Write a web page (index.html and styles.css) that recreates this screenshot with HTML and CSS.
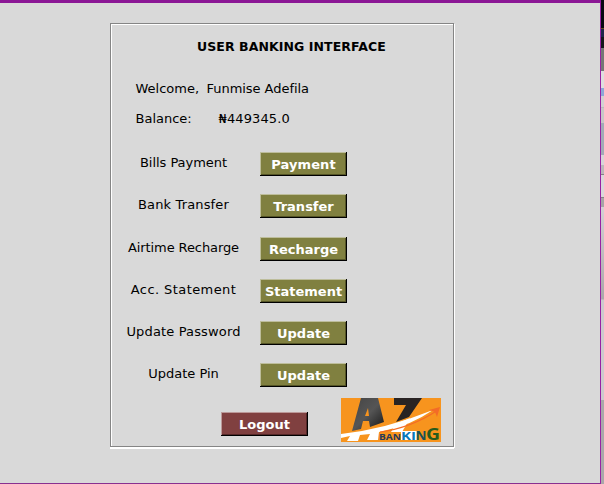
FILE: index.html
```html
<!DOCTYPE html>
<html lang="en">
<head>
<meta charset="utf-8">
<title>User Banking Interface</title>
<link rel="stylesheet" href="styles.css">
</head>
<body>
<div class="window">
  <main class="panel">
    <h1>USER BANKING INTERFACE</h1>
    <div class="info welcome"><span class="key">Welcome,</span><span class="name">Funmise Adefila</span></div>
    <div class="info balance"><span class="key">Balance:</span><span class="amount">₦449345.0</span></div>
    <div class="actions">
      <div class="row"><label class="bills">Bills Payment</label><button class="pay">Payment</button></div>
      <div class="row"><label class="transfer">Bank Transfer</label><button>Transfer</button></div>
      <div class="row late"><label class="airtime">Airtime Recharge</label><button>Recharge</button></div>
      <div class="row"><label class="statement">Acc. Statement</label><button>Statement</button></div>
      <div class="row"><label class="password">Update Password</label><button>Update</button></div>
      <div class="row"><label class="pin">Update Pin</label><button>Update</button></div>
    </div>
    <footer>
      <button class="logout">Logout</button>
      <svg class="logo" width="100" height="44" viewBox="0 0 100 44" role="img" aria-label="AZ Banking">
        <defs>
          <linearGradient id="dark" x1="0" y1="0" x2="1" y2="1"><stop offset="0" stop-color="#444"/><stop offset=".5" stop-color="#555"/><stop offset="1" stop-color="#151515"/></linearGradient>
        </defs>
        <rect width="100" height="44" fill="#f7941e"/>
        <path d="M20 0H37L43 24L29 29L28 23H22L20 31L11 33Z M24 18H28L27 10Z" fill="url(#dark)" fill-rule="evenodd"/>
        <path d="M53 0H81L68 19L55 24L65 7H53Z" fill="#292423"/>
        <path d="M0 36Q45 31 92 12Q70 27 46 32L38 34L37 42H26L29 36L19 37L17 43H6L9 38L0 40Z" fill="#fff"/>
        <path d="M55 26L69 20L61 34H50Z" fill="#fff"/>
        <path d="M39 34Q70 30 97 12" fill="none" stroke="#f36b27" stroke-width="1.2"/>
        <path d="M88 12L99 9L96 19L94 14Z" fill="#f36b27"/>
        <path d="M60 33H76V42H60Z" fill="#fff"/>
        <text class="brand" x="38" y="41.5" font-size="9" textLength="22" lengthAdjust="spacingAndGlyphs" fill="#283a58">BAN</text>
        <text class="brand" x="60" y="41.5" font-size="10.5" textLength="15" lengthAdjust="spacingAndGlyphs" fill="#0878b8">KI</text>
        <text class="brand" x="74.5" y="41.5" font-size="13" textLength="11" lengthAdjust="spacingAndGlyphs" fill="#17515a">N</text>
        <text class="brand" x="85" y="41.5" font-size="16" textLength="14" lengthAdjust="spacingAndGlyphs" fill="#275b1c">G</text>
      </svg>
    </footer>
  </main>
</div>
<aside class="desktop"></aside>
</body>
</html>
```
FILE: styles.css
```css
* { box-sizing: border-box; }
body {
  margin: 0;
  width: 604px;
  height: 484px;
  display: flex;
  overflow: hidden;
  background: #d9d9d9;
  color: #000;
  font: 13px/16px "DejaVu Sans", sans-serif;
}
.window {
  width: 601px;
  height: 484px;
  padding: 20px 0 0 110px;
  border-top: 3px solid #8b1795;
  border-right: 1px solid #9a20a4;
  border-bottom: 1px solid #883090;
}
.desktop {
  width: 3px;
  background: linear-gradient(#090812 0 28px, #665020 28px 29px, #202449 29px 37px, #17151b 37px 48px, #767676 48px 71px, #dedede 71px 88px, #8ea8d7 88px 96px, #d2d2d2 96px 107px, #bbb 107px 108px, #c7c7c7 108px 123px, #a2abb7 123px 155px, #d8d5d8 155px 165px, #bbb8bb 165px 174px, #858285 174px 175px, #dad7da 175px 197px, #858285 197px 198px, #a7a4a7 198px 207px, #d4d1d4 207px, #aaa7aa 299px, #cdcacd 300px 400px, #aaa8aa 400px);
}
.panel {
  width: 344px;
  height: 424px;
  padding-top: 15px;
  border: 1px solid #858585;
  box-shadow: inset 1px 1px #fff, 1px 1px #fff, 0 2px #fff;
}
h1 {
  margin: 0 0 0 86px;
  font: bold 12.5px/16px "DejaVu Sans", sans-serif;
  letter-spacing: .08px;
  white-space: nowrap;
}
.info { display: flex; height: 16px; margin-left: 24.5px; white-space: nowrap; }
.welcome { margin-top: 26px; }
.balance { margin-top: 14px; }
.welcome .key { width: 71px; }
.balance .key { width: 83px; }
.name { letter-spacing: -.04px; }
.amount { letter-spacing: .12px; }
.actions { margin: 25px 0 0 15px; }
.row {
  display: grid;
  grid-template-columns: 115px 87px;
  column-gap: 19px;
  height: 24px;
  margin-bottom: 18px;
}
.row.late { margin-top: 19px; }
label { padding-top: 3px; text-align: center; white-space: nowrap; }
.bills { letter-spacing: -.04px; }
.transfer { letter-spacing: .15px; }
.airtime { letter-spacing: -.1px; }
.statement { letter-spacing: .42px; }
.password { letter-spacing: .15px; }
button {
  width: 87px;
  height: 24px;
  padding: 2px 0 0;
  border: 0;
  background: #808040;
  box-shadow: inset -1px -1px #000, inset 1px 1px #bdbd9b, inset -2px -2px #555526;
  color: #fff;
  font: bold 13px/16px "DejaVu Sans", sans-serif;
  text-align: center;
  white-space: nowrap;
}
.pay { letter-spacing: .1px; }
footer { display: flex; margin: -7px 0 0 110px; }
.logout {
  margin-top: 14px;
  background: #804040;
  box-shadow: inset -1px -1px #000, inset 1px 1px #b99, inset -2px -2px #552828;
}
.logo { display: block; margin-left: 33px; }
.brand { font-family: "Open Sans", sans-serif; font-weight: bold; }
```
